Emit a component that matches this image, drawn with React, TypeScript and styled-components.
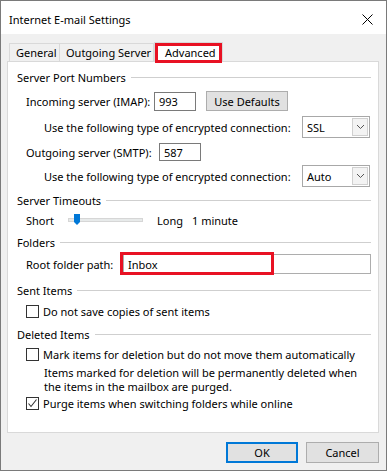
import styled, { createGlobalStyle } from 'styled-components';

const GlobalStyle = createGlobalStyle`
  html, body {
    margin: 0;
    padding: 0;
    background: #ffffff;
  }
  body {
    font-family: "Noto Sans", "Open Sans", sans-serif;
    font-size: 11px;
    color: #000;
  }
`;

const Window = styled.div`
  width: 387px;
  height: 471px;
  box-sizing: border-box;
  border: 1px solid #7a7a7a;
  display: flex;
  flex-direction: column;
`;

const TitleBar = styled.div`
  height: 33px;
  flex: 0 0 33px;
  background: #fff;
  display: flex;
  align-items: center;
  justify-content: space-between;
  padding: 0 8px 0 8px;
  box-sizing: border-box;
`;

const Title = styled.span`
  font-size: 11px;
  margin-top: 4px;
`;

const CloseButton = styled.button`
  width: 16px;
  height: 16px;
  border: 0;
  padding: 0;
  background: transparent;
  display: flex;
  align-items: center;
  justify-content: center;
  margin-right: 3px;
  margin-top: 3px;
`;

const Body = styled.div`
  flex: 1;
  background: #f0f0f0;
  padding: 8px 7px 7px 6px;
`;

const TabRow = styled.div`
  display: flex;
  align-items: flex-end;
  height: 20px;
  margin: 0 0 -1px 2px;
`;

const Tab = styled.div<{ $w: number; $active?: boolean }>`
  width: ${(p) => p.$w}px;
  box-sizing: border-box;
  height: ${(p) => (p.$active ? 20 : 18)}px;
  margin-bottom: ${(p) => (p.$active ? 0 : 1)}px;
  background: ${(p) => (p.$active ? '#fff' : '#f0f0f0')};
  border: 1px solid #d9d9d9;
  border-bottom: 0;
  border-left-width: ${(p) => (p.$active ? 1 : 0)}px;
  padding-left: ${(p) => (p.$active ? 10 : 6)}px;
  display: flex;
  align-items: center;
  position: ${(p) => (p.$active ? 'relative' : 'static')};
  z-index: ${(p) => (p.$active ? 1 : 0)};
  white-space: nowrap;

  &:first-child {
    border-left-width: 1px;
  }
`;

const Highlight = styled.div<{ $bottom?: number }>`
  position: absolute;
  top: 0;
  left: 0;
  right: 0;
  bottom: ${(p) => p.$bottom ?? 0}px;
  border: 3px solid #e81123;
  pointer-events: none;
`;

const Panel = styled.div`
  height: 372px;
  box-sizing: border-box;
  background: #fff;
  border: 1px solid #d9d9d9;
  padding: 6px 7px 0 9px;
`;

const Heading = styled.div<{ $mt?: number }>`
  display: flex;
  align-items: center;
  height: 18px;
  margin-top: ${(p) => p.$mt ?? 0}px;

  &::after {
    content: '';
    flex: 1;
    height: 1px;
    background: #cfcfcf;
    margin-left: 5px;
    margin-top: 1px;
  }
`;

const Row = styled.div<{ $mt?: number; $h?: number; $indent?: number }>`
  display: flex;
  align-items: center;
  height: ${(p) => p.$h ?? 18}px;
  margin-top: ${(p) => p.$mt ?? 0}px;
  padding-left: ${(p) => p.$indent ?? 9}px;
  white-space: nowrap;
`;

const Label = styled.span<{ $w?: number }>`
  display: inline-block;
  width: ${(p) => (p.$w ? `${p.$w}px` : 'auto')};
  flex: 0 0 auto;
`;

const TextBox = styled.div<{ $w: number; $h?: number }>`
  width: ${(p) => p.$w}px;
  height: ${(p) => p.$h ?? 19}px;
  flex: 0 0 auto;
  box-sizing: border-box;
  border: 1px solid #7a7a7a;
  background: #fff;
  padding-left: 4px;
  display: flex;
  align-items: center;
  position: relative;
`;

const WideBox = styled(TextBox)`
  border-color: #adadad;
`;

const PushButton = styled.button<{ $w: number; $default?: boolean }>`
  width: ${(p) => p.$w}px;
  height: 21px;
  flex: 0 0 auto;
  box-sizing: border-box;
  background: #e1e1e1;
  border: ${(p) => (p.$default ? '2px solid #0078d7' : '1px solid #adadad')};
  font-family: inherit;
  font-size: 11px;
  color: #000;
  padding: 0;
`;

const Select = styled.div`
  width: 68px;
  height: 22px;
  flex: 0 0 auto;
  box-sizing: border-box;
  border: 1px solid #a8a8a8;
  background: #fff;
  display: flex;
  align-items: center;
  justify-content: space-between;
  padding: 0 1px 0 4px;
`;

const SelectArrow = styled.div`
  width: 16px;
  height: 18px;
  box-sizing: border-box;
  border: 1px solid #d0d0d0;
  background: #f3f3f3;
  display: flex;
  align-items: center;
  justify-content: center;
`;

const Slider = styled.div`
  width: 75px;
  height: 4px;
  flex: 0 0 auto;
  box-sizing: border-box;
  background: #e7eaea;
  border: 1px solid #d6d6d6;
  margin: 0 14px 0 0;
  position: relative;
`;

const Thumb = styled.svg`
  position: absolute;
  left: 5px;
  top: -5px;
`;

const Check = styled.div`
  width: 13px;
  height: 13px;
  flex: 0 0 13px;
  box-sizing: border-box;
  border: 1px solid #333;
  background: #fff;
  margin-right: 4px;
  display: flex;
  align-items: center;
  justify-content: center;
`;

const Note = styled.div`
  margin: 3px 0 0 27px;
  line-height: 14px;
  white-space: nowrap;
`;

const Footer = styled.div`
  display: flex;
  justify-content: flex-end;
  gap: 8px;
  margin-top: 9px;
`;

const Chevron = () => (
  <svg width="9" height="6" viewBox="0 0 9 6">
    <path d="M1 1 L4.5 4.5 L8 1" fill="none" stroke="#555" strokeWidth="1" />
  </svg>
);

function Dropdown({ value }: { value: string }) {
  return (
    <Select>
      <span>{value}</span>
      <SelectArrow>
        <Chevron />
      </SelectArrow>
    </Select>
  );
}

function CheckBox({ checked }: { checked?: boolean }) {
  return (
    <Check>
      {checked && (
        <svg width="11" height="11" viewBox="0 0 11 11">
          <path d="M1.5 5.5 L4 8.5 L9.5 1.5" fill="none" stroke="#333" strokeWidth="1.1" />
        </svg>
      )}
    </Check>
  );
}

export default function App() {
  return (
    <>
      <GlobalStyle />
      <Window>
        <TitleBar>
          <Title>Internet E-mail Settings</Title>
          <CloseButton aria-label="Close">
            <svg width="11" height="11" viewBox="0 0 11 11">
              <path d="M0.5 0.5 L10.5 10.5 M10.5 0.5 L0.5 10.5" stroke="#000" strokeWidth="1" />
            </svg>
          </CloseButton>
        </TitleBar>
        <Body>
          <TabRow>
            <Tab $w={51}>General</Tab>
            <Tab $w={94}>Outgoing Server</Tab>
            <Tab $w={69} $active>
              Advanced
              <Highlight $bottom={-1} />
            </Tab>
          </TabRow>
          <Panel>
            <Heading>Server Port Numbers</Heading>
            <Row $mt={5} $h={20}>
              <Label $w={128}>Incoming server (IMAP):</Label>
              <TextBox $w={42}>993</TextBox>
              <PushButton $w={82} style={{ marginLeft: 10, height: 20 }}>
                Use Defaults
              </PushButton>
            </Row>
            <Row $mt={5} $h={22} $indent={27}>
              <Label $w={258}>Use the following type of encrypted connection:</Label>
              <Dropdown value="SSL" />
            </Row>
            <Row $mt={5} $h={18}>
              <Label $w={133}>Outgoing server (SMTP):</Label>
              <TextBox $w={42} $h={18}>587</TextBox>
            </Row>
            <Row $mt={4} $h={22} $indent={27}>
              <Label $w={258}>Use the following type of encrypted connection:</Label>
              <Dropdown value="Auto" />
            </Row>

            <Heading $mt={4}>Server Timeouts</Heading>
            <Row $mt={2}>
              <Label $w={42}>Short</Label>
              <Slider>
                <Thumb width="6" height="11" viewBox="0 0 6 11">
                  <path d="M0 0 H6 V8 L3 11 L0 8 Z" fill="#0078d7" />
                </Thumb>
              </Slider>
              <Label $w={35}>Long</Label>
              <Label>1 minute</Label>
            </Row>

            <Heading $mt={4}>Folders</Heading>
            <Row $mt={3} $h={20}>
              <Label $w={97}>Root folder path:</Label>
              <WideBox $w={248} $h={20}>
                Inbox
                <Highlight style={{ top: -3, left: -4, right: 96, bottom: -2 }} />
              </WideBox>
            </Row>

            <Heading $mt={7}>Sent Items</Heading>
            <Row $mt={3}>
              <CheckBox />
              <Label>Do not save copies of sent items</Label>
            </Row>

            <Heading $mt={5}>Deleted Items</Heading>
            <Row $mt={2}>
              <CheckBox />
              <Label>Mark items for deletion but do not move them automatically</Label>
            </Row>
            <Note>
              Items marked for deletion will be permanently deleted when
              <br />
              the items in the mailbox are purged.
            </Note>
            <Row>
              <CheckBox checked />
              <Label>Purge items when switching folders while online</Label>
            </Row>
          </Panel>
          <Footer>
            <PushButton $w={72} $default>
              OK
            </PushButton>
            <PushButton $w={73}>Cancel</PushButton>
          </Footer>
        </Body>
      </Window>
    </>
  );
}
